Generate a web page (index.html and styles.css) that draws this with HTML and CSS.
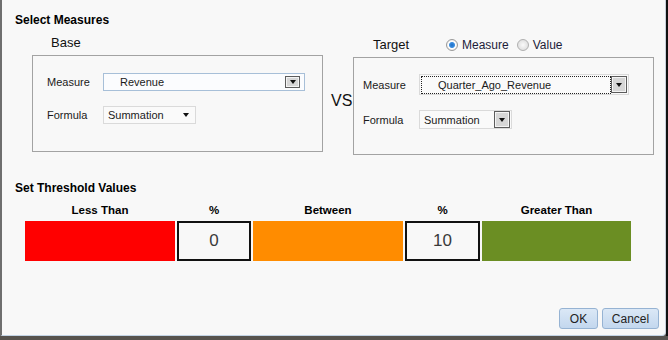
FILE: index.html
```html
<!DOCTYPE html>
<html lang="en">
<head>
    <meta charset="UTF-8">
    <title>Select Measures</title>
    <link rel="stylesheet" href="styles.css">
</head>
<body>
    <div class="frame">
        <div class="dialog">
            <div class="section-title">Select Measures</div>

            <div class="measures">
                <div class="base-col">
                    <div class="col-label">Base</div>
                    <div class="box base-box">
                        <div class="row">
                            <span class="lbl">Measure</span>
                            <div class="select sel-blue w-measure">
                                <span class="val pad-val">Revenue</span>
                                <span class="dd-btn small"><i class="tri"></i></span>
                            </div>
                        </div>
                        <div class="row">
                            <span class="lbl">Formula</span>
                            <div class="select sel-plain w-formula">
                                <span class="val">Summation</span>
                                <i class="tri arrow"></i>
                            </div>
                        </div>
                    </div>
                </div>

                <div class="vs">VS</div>

                <div class="target-col">
                    <div class="target-head">
                        <span class="col-label target-label">Target</span>
                        <span class="radio on"></span><span class="radio-text">Measure</span>
                        <span class="radio off"></span><span class="radio-text">Value</span>
                    </div>
                    <div class="box target-box">
                        <div class="row">
                            <span class="lbl">Measure</span>
                            <div class="select sel-plain w-tmeasure">
                                <span class="focus"><span class="val pad-val">Quarter_Ago_Revenue</span></span>
                                <span class="dd-btn tall"><i class="tri"></i></span>
                            </div>
                        </div>
                        <div class="row">
                            <span class="lbl">Formula</span>
                            <div class="select sel-plain w-tformula">
                                <span class="val">Summation</span>
                                <span class="dd-btn tall"><i class="tri"></i></span>
                            </div>
                        </div>
                    </div>
                </div>
            </div>

            <div class="section-title th-title">Set Threshold Values</div>

            <div class="thresholds">
                <div class="th-head">Less Than</div>
                <div class="th-head">%</div>
                <div class="th-head">Between</div>
                <div class="th-head">%</div>
                <div class="th-head">Greater Than</div>

                <div class="bar red"></div>
                <div class="num">0</div>
                <div class="bar orange"></div>
                <div class="num">10</div>
                <div class="bar green"></div>
            </div>

            <div class="actions">
                <button class="btn ok">OK</button>
                <button class="btn cancel">Cancel</button>
            </div>
        </div>
        <div class="edge"></div>
    </div>
</body>
</html>
```

FILE: styles.css
```css
body { margin: 0; background: #57534e; font-family: "Liberation Sans", Arial, sans-serif; color: #1a1a1a; }
.frame { display: flex; height: 336px; }
.dialog { width: 663px; height: 335px; background: #f8f8f8; border-left: 2px solid #6f6f6f; border-right: 1px solid #c7d0da; border-bottom: 1px solid #c3d3e4; border-bottom-right-radius: 4px; display: flex; flex-direction: column; }
.edge { width: 2px; background: #111; }

.section-title { font-size: 12px; font-weight: bold; line-height: 14px; padding: 13px 0 0 13px; color: #000; }
.th-title { padding-top: 0; margin-top: 26px; }

.measures { display: flex; align-items: flex-start; margin-left: 30px; }
.col-label { font-size: 13px; line-height: 16px; color: #111; }
.base-col .col-label { margin: 8px 0 4px 19px; }
.box { border: 1px solid #a3a3a3; box-sizing: border-box; }
.base-box { width: 291px; height: 97px; padding: 17px 0 0 14px; }
.target-box { width: 301px; height: 98px; padding: 16px 0 0 9px; }
.row { display: flex; align-items: center; margin-bottom: 15px; }
.lbl { width: 56px; font-size: 11px; }

.select { display: flex; align-items: center; box-sizing: border-box; font-size: 11px; background: #fafafa; }
.sel-blue { border: 1px solid #a7bfd8; background: #fbfcfe; }
.sel-plain { border: 1px solid #dadada; }
.w-measure { width: 202px; height: 18px; }
.w-formula { width: 93px; height: 18px; }
.w-tmeasure { width: 210px; height: 21px; padding-left: 1px; }
.w-tformula { width: 93px; height: 19px; }
.val { flex: 1; padding-left: 4px; white-space: nowrap; }
.pad-val { padding-left: 16px; }
.focus { flex: 1; display: flex; align-items: center; height: 16px; border: 1px dotted #222; }
.tri { width: 0; height: 0; border-left: 3.5px solid transparent; border-right: 3.5px solid transparent; border-top: 4px solid #111; }
.arrow { margin-right: 6px; }
.dd-btn { display: flex; align-items: center; justify-content: center; box-sizing: border-box; border: 1px solid #5c5c5c; box-shadow: inset 0 0 0 1px #f4f4f4; background: #d6d6d6; margin-right: 2px; }
.dd-btn.small { width: 15px; height: 12px; margin-right: 4px; }
.dd-btn.tall { width: 16px; height: 17px; margin-right: 1px; }

.vs { width: 22px; padding-left: 8px; margin-top: 65px; font-size: 16px; line-height: 18px; color: #111; }

.target-col { margin-top: 10px; }
.target-head { display: flex; align-items: center; height: 16px; margin-bottom: 4px; }
.target-label { width: 73px; margin-left: 20px; }
.radio { width: 12px; height: 12px; border-radius: 50%; box-sizing: border-box; border: 1px solid #9a9a9a; margin-right: 4px; }
.radio.on { background: radial-gradient(circle, #1f6fc6 0, #3c8ee0 2.5px, #fff 3.5px, #e2e2e2 6px); }
.radio.off { background: radial-gradient(circle, #fafafa 0, #dcdcdc 6px); margin-left: 8px; border-color: #b0b0b0; }
.radio-text { font-size: 12px; color: #1d1d3a; }

.thresholds { display: grid; grid-template-columns: 150px 74px 150px 75px 149px; column-gap: 2px; margin: 8px 0 0 23px; }
.th-head { font-size: 11.5px; font-weight: bold; line-height: 14px; text-align: center; color: #000; margin-bottom: 4px; }
.bar { height: 40px; }
.red { background: #ff0000; }
.orange { background: #ff8c00; }
.green { background: #6b8e23; }
.num { height: 40px; box-sizing: border-box; border: 2px solid #111; background: #f8f8f8; display: flex; align-items: center; justify-content: center; font-size: 17px; color: #3a3a3a; }

.actions { margin-top: auto; display: flex; justify-content: flex-end; gap: 4px; padding: 0 6px 6px 0; }
.btn { height: 21px; padding: 0; font-family: "Liberation Sans", Arial, sans-serif; font-size: 12px; color: #222; border: 1px solid #96b3d3; border-radius: 3px; background: linear-gradient(#dbe8f6, #c3d7ee); }
.ok { width: 39px; }
.cancel { width: 57px; }
```
